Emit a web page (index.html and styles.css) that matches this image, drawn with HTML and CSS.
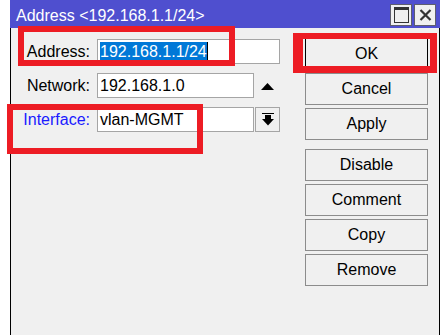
FILE: index.html
```html
<!DOCTYPE html>
<html>
<head>
    <title>Address &lt;192.168.1.1/24&gt;</title>
    <link rel="stylesheet" href="styles.css">
</head>
<body>
<div class="window">
    <div class="titlebar">
        <span class="title">Address &lt;192.168.1.1/24&gt;</span>
        <div class="title-btns">
            <span class="tbtn">
                <svg width="15" height="16" viewBox="0 0 15 16"><rect x="0.5" y="0.5" width="14" height="15" fill="none" stroke="#333" stroke-width="1"/><rect x="0" y="0" width="15" height="3" fill="#333"/></svg>
            </span>
            <span class="tbtn">
                <svg width="13" height="12" viewBox="0 0 13 12"><path d="M1.5 1L11.5 11M11.5 1L1.5 11" stroke="#333" stroke-width="2.2" fill="none"/></svg>
            </span>
        </div>
    </div>
    <div class="window-body">
        <div class="fields">
            <div class="row">
                <span class="lbl">Address:</span>
                <div class="field field-long"><span class="sel">192.168.1.1/24</span><span class="caret"></span></div>
            </div>
            <div class="row">
                <span class="lbl">Network:</span>
                <div class="field field-short">192.168.1.0</div>
                <span class="side side-plain">
                    <svg width="13" height="7" viewBox="0 0 13 7"><polygon points="0,7 13,7 6.5,0" fill="#000"/></svg>
                </span>
            </div>
            <div class="row">
                <span class="lbl lbl-link">Interface:</span>
                <div class="field field-short">vlan-MGMT</div>
                <span class="side side-drop">
                    <svg width="12" height="13" viewBox="0 0 12 13"><rect x="0" y="0" width="12" height="1" fill="#000"/><rect x="3" y="2" width="6" height="4" fill="#000"/><polygon points="0,6 12,6 6,12.5" fill="#000"/></svg>
                </span>
            </div>
        </div>
        <div class="actions">
            <span class="btn btn-default">OK</span>
            <span class="btn">Cancel</span>
            <span class="btn btn-last">Apply</span>
            <span class="btn">Disable</span>
            <span class="btn">Comment</span>
            <span class="btn">Copy</span>
            <span class="btn">Remove</span>
        </div>
    </div>
</div>
<div class="mark mark-address"></div>
<div class="mark mark-ok"></div>
<div class="mark mark-interface"></div>
</body>
</html>
```

FILE: styles.css
```css
body{
    margin: 0;
    background: #fff;
    font-family: "Liberation Sans", Arial, sans-serif;
    font-size: 16px;
    color: #000;
}
.window{
    margin-left: 10px;
    width: 430px;
    height: 335px;
}
.titlebar{
    height: 28px;
    background: #4f4fcf;
    display: flex;
    color: #fff;
}
.titlebar .title{
    padding: 4px 0 0 6px;
    line-height: 24px;
}
.title-btns{
    margin-left: auto;
    margin-right: 4px;
    margin-top: 4px;
    display: flex;
    gap: 2px;
}
.tbtn{
    width: 22px;
    height: 22px;
    box-sizing: border-box;
    border: 1px solid #5e5e6e;
    background: #f0f0f0;
    display: flex;
    align-items: center;
    justify-content: center;
}
.window-body{
    height: 307px;
    box-sizing: border-box;
    border-left: 1px solid #000;
    border-right: 1px solid #000;
    background: #f0f0f0;
    display: flex;
}
.fields{
    flex: 1;
    padding-top: 11px;
}
.row{
    display: flex;
    align-items: center;
    height: 25px;
    margin-bottom: 9px;
}
.lbl{
    width: 79px;
    margin-right: 7px;
    text-align: right;
}
.lbl-link{
    color: #1a1aff;
}
.field{
    height: 25px;
    box-sizing: border-box;
    border: 1px solid #a5a5a5;
    background: #fff;
    padding: 0 2px;
    line-height: 23px;
    display: flex;
    align-items: center;
    white-space: nowrap;
}
.field-long{
    width: 183px;
}
.field-short{
    width: 157px;
}
.sel{
    background: #0078d7;
    color: #fff;
    line-height: 20px;
}
.caret{
    width: 1px;
    height: 20px;
    background: #000;
}
.side{
    width: 25px;
    height: 25px;
    box-sizing: border-box;
    margin-left: 1px;
    display: flex;
    align-items: center;
    justify-content: center;
}
.side-drop{
    border: 1px solid #a5a5a5;
    background: #f0f0f0;
}
.side-plain svg{
    margin-top: 1px;
}
.actions{
    width: 123px;
    margin-right: 11px;
    padding-top: 10px;
    display: flex;
    flex-direction: column;
}
.btn{
    height: 32px;
    box-sizing: border-box;
    border: 1px solid #8c8c8c;
    background: #f0f0f0;
    line-height: 30px;
    text-align: center;
    margin-bottom: 3px;
}
.btn-default{
    border-color: #000;
}
.btn-last{
    margin-bottom: 9px;
}
.mark{
    position: absolute;
    box-sizing: border-box;
    border: 6px solid #ed1c24;
}
.mark-address{
    left: 18px;
    top: 26px;
    width: 217px;
    height: 40px;
}
.mark-ok{
    left: 293px;
    top: 33px;
    width: 144px;
    height: 40px;
    border-width: 6px 7px 7px 10px;
}
.mark-interface{
    left: 7px;
    top: 104px;
    width: 196px;
    height: 50px;
}
```
